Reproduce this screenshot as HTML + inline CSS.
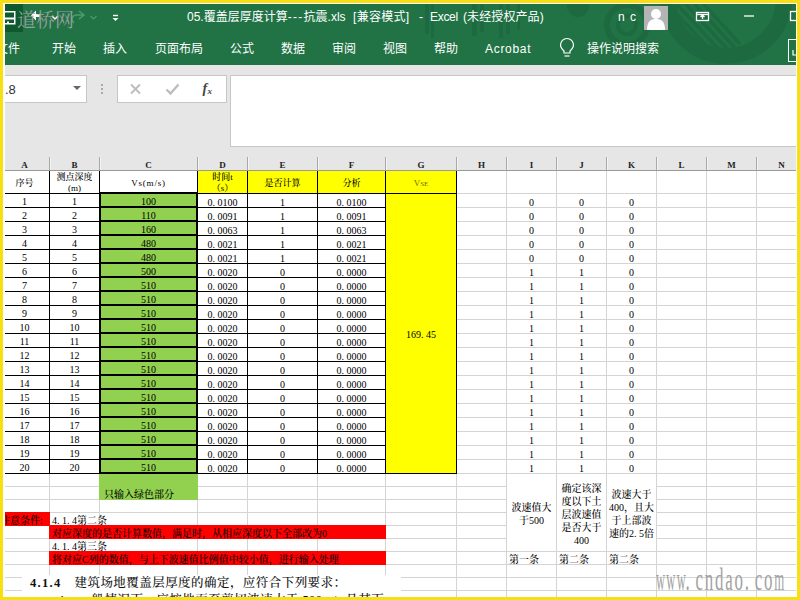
<!DOCTYPE html>
<html lang="zh-CN"><head><meta charset="utf-8"><title>05.覆盖层厚度计算---抗震.xls</title>
<style>
html,body{margin:0;padding:0}
body{width:800px;height:600px;overflow:hidden;background:#f8e010;position:relative;font-family:"Liberation Sans","Noto Sans CJK SC",sans-serif}
#frame{position:absolute;left:3px;top:3px;width:794px;height:594px;background:#fff;overflow:hidden}
#app{position:absolute;left:2px;top:1px;width:791px;height:593px;background:#fff;overflow:hidden}
.abs{position:absolute}
#green{left:0;top:0;width:791px;height:61px;background:#217346;overflow:hidden}
.tt{position:absolute;color:#fff;font-size:12px;line-height:16px;white-space:nowrap}
#gray{left:0;top:61px;width:791px;height:106px;background:#e6e6e6}
.box{position:absolute;background:#fff;border:1px solid #c6c6c6;box-sizing:border-box}
.ch{position:absolute;top:154px;height:14px;font-family:"Liberation Serif","Noto Serif CJK SC",serif;font-size:9px;font-weight:bold;line-height:14px;text-align:center;color:#222}
.cs{position:absolute;top:153px;width:1px;height:13px;background:#a8a8a8;box-shadow:1px 0 0 #f4f4f4}
#sheet{left:0;top:167px;width:791px;height:426px;background:#fff;overflow:hidden;font-family:"Liberation Serif","Noto Serif CJK SC",serif;font-size:10px;color:#000;font-weight:500}
.gl{position:absolute;background:#d4d4d4}
.c{position:absolute;box-sizing:border-box;text-align:center;white-space:nowrap;overflow:visible}
.h{font-size:9px}
.l{text-align:left;padding-left:2px}
.bk{position:absolute;background:#000}
i{font-style:normal;letter-spacing:2.5px}
</style></head><body><div id="frame"><div id="app">

<div id="green" class="abs">
<div class="abs" style="left:0;top:0;width:18px;height:28px;background:#0e5a2e"></div>
<svg class="abs" style="left:0;top:0" width="791" height="61" viewBox="5 4 791 61"><g fill="none" stroke="#1e6a40"><circle cx="726" cy="-2" r="58" stroke-width="16"/><circle cx="627" cy="25" r="20" stroke-width="6"/><circle cx="627" cy="25" r="9" stroke-width="4"/></g><clipPath id="cp"><circle cx="726" cy="-2" r="50"/></clipPath><g stroke="#1e6a40" stroke-width="3.500" clip-path="url(#cp)"><line x1="664" y1="0" x2="714" y2="54"/><line x1="673" y1="0" x2="723" y2="54"/><line x1="682" y1="0" x2="732" y2="54"/><line x1="691" y1="0" x2="737" y2="50"/><line x1="700" y1="0" x2="740" y2="44"/></g><g fill="#1e6a40"><circle cx="578" cy="6" r="11"/><rect x="425" y="4" width="4" height="30"/><rect x="431" y="4" width="3" height="34"/><rect x="472" y="4" width="5" height="32"/><rect x="480" y="4" width="4" height="28"/><rect x="499" y="4" width="4" height="34"/><rect x="506" y="4" width="4" height="30"/><rect x="517" y="4" width="3" height="26"/></g></svg>
</div>
<div class="tt" style="left:182px;top:5px;">05.覆盖层厚度计算<span style="letter-spacing:1.3px">---</span>抗震.xls</div>
<div class="tt" style="left:348px;top:5px;letter-spacing:.3px">[兼容模式]</div>
<div class="tt" style="left:414px;top:5px;">-</div>
<div class="tt" style="left:425px;top:5px;letter-spacing:-.3px">Excel</div>
<div class="tt" style="left:458px;top:5px;letter-spacing:.1px">(未经授权产品)</div>
<div class="tt" style="left:613px;top:5px;letter-spacing:1px">n c</div>
<div class="tt" style="left:-9px;top:37px;">文件</div>
<div class="tt" style="left:47px;top:37px;">开始</div>
<div class="tt" style="left:98px;top:37px;">插入</div>
<div class="tt" style="left:150px;top:37px;">页面布局</div>
<div class="tt" style="left:225px;top:37px;">公式</div>
<div class="tt" style="left:276px;top:37px;">数据</div>
<div class="tt" style="left:327px;top:37px;">审阅</div>
<div class="tt" style="left:378px;top:37px;">视图</div>
<div class="tt" style="left:429px;top:37px;">帮助</div>
<div class="tt" style="left:480px;top:37px;letter-spacing:.7px">Acrobat</div>
<div class="tt" style="left:582px;top:37px;">操作说明搜索</div>
<svg class="abs" style="left:0;top:0" width="791" height="61" viewBox="5 4 791 61">
<g fill="none" stroke="#fff"><path d="M4 11.750h10.750v12h-10.750" stroke-width="1.500"/><path d="M4 18.500h10" stroke-width="2"/></g><rect x="7" y="21.500" width="2" height="1.500" fill="#fff"/>
<path d="M31 15.500l5-5v3.500h4v3h-4v3.500z" fill="#fff"/>
<path d="M52 16l3 3 3-3" fill="none" stroke="#fff" stroke-width="1.5"/>
<path d="M79 11l5 4-5 4M84 15h-7c-5 0-7 5-3 8" fill="none" stroke="#4d9a70" stroke-width="1.500"/>
<path d="M90.500 16l3 3 3-3" fill="none" stroke="#4d9a70" stroke-width="1.200"/>
<path d="M113 15.500h5" stroke="#fff" stroke-width="1.400"/><path d="M112.500 18h6l-3 3z" fill="#fff"/>
<rect x="644" y="6" width="24" height="24" fill="#b4b4b4"/><circle cx="656" cy="14" r="5" fill="#fff"/><path d="M647 30c0-9 4-11 9-11s9 2 9 11z" fill="#fff"/>
<g fill="none" stroke="#fff" stroke-width="1.3"><rect x="696.500" y="12.500" width="12" height="8"/><path d="M696 14.500h13"/><path d="M702.500 19v-4m-2 2l2-2 2 2"/></g>
<path d="M744 16h10" stroke="#fff" stroke-width="1.3"/>
<rect x="790.500" y="11.500" width="10" height="9" fill="none" stroke="#fff" stroke-width="1.3"/>
<rect x="788.500" y="39.500" width="12" height="22" fill="none" stroke="#fff" stroke-width="1"/><path d="M793 50v5h6" fill="none" stroke="#fff" stroke-width="1.2"/>
<g fill="none" stroke="#fff" stroke-width="1.2"><path d="M564 53v-2c-3-3-3.500-4.500-3.500-6a5.500 5.500 0 0 1 13 0c0 1.500-0.500 3-3.500 6v2z"/><path d="M564.500 56h5"/></g>
</svg>
<div class="abs" style="left:12px;top:2px;font-family:'Noto Serif CJK SC',serif;font-size:19px;line-height:26px;color:#a3a5a8;opacity:.9;white-space:nowrap">道桥网</div>
<div id="gray" class="abs"></div>
<div class="box" style="left:-10px;top:71px;width:92px;height:28px"></div>
<div class="abs" style="left:0px;top:78px;font-size:13px;line-height:16px;color:#333">.8</div>
<div class="abs" style="left:68px;top:82px;width:0;height:0;border-left:4px solid transparent;border-right:4px solid transparent;border-top:4px solid #666"></div>
<div class="abs" style="left:96px;top:80px;width:2px;height:2px;background:#aaa"></div>
<div class="abs" style="left:96px;top:84px;width:2px;height:2px;background:#aaa"></div>
<div class="abs" style="left:96px;top:88px;width:2px;height:2px;background:#aaa"></div>
<div class="box" style="left:112px;top:71px;width:110px;height:28px"></div>
<svg class="abs" style="left:112px;top:71px" width="110" height="28" viewBox="117 75 110 28"><path d="M131 84.500l9 9m0-9l-9 9" stroke="#bdbdbd" stroke-width="2" fill="none"/><path d="M166.500 89.500l4 4 8-9" stroke="#bdbdbd" stroke-width="2.400" fill="none"/><text x="202.500" y="93" font-family="Liberation Serif,serif" font-style="italic" font-weight="bold" font-size="14" fill="#444">f</text><text x="207.500" y="94" font-family="Liberation Serif,serif" font-style="italic" font-weight="bold" font-size="9" fill="#444">x</text></svg>
<div class="box" style="left:225px;top:71px;width:570px;height:72px"></div>
<div class="ch" style="left:-5px;width:49px">A</div>
<div class="cs" style="left:44px"></div>
<div class="ch" style="left:45px;width:49px">B</div>
<div class="cs" style="left:94px"></div>
<div class="ch" style="left:95px;width:97px">C</div>
<div class="cs" style="left:192px"></div>
<div class="ch" style="left:193px;width:49px">D</div>
<div class="cs" style="left:242px"></div>
<div class="ch" style="left:243px;width:69px">E</div>
<div class="cs" style="left:312px"></div>
<div class="ch" style="left:313px;width:67px">F</div>
<div class="cs" style="left:380px"></div>
<div class="ch" style="left:381px;width:70px">G</div>
<div class="cs" style="left:451px"></div>
<div class="ch" style="left:452px;width:49px">H</div>
<div class="cs" style="left:501px"></div>
<div class="ch" style="left:502px;width:49px">I</div>
<div class="cs" style="left:551px"></div>
<div class="ch" style="left:552px;width:49px">J</div>
<div class="cs" style="left:601px"></div>
<div class="ch" style="left:602px;width:49px">K</div>
<div class="cs" style="left:651px"></div>
<div class="ch" style="left:652px;width:49px">L</div>
<div class="cs" style="left:701px"></div>
<div class="ch" style="left:702px;width:49px">M</div>
<div class="cs" style="left:751px"></div>
<div class="ch" style="left:752px;width:49px">N</div>
<div class="cs" style="left:801px"></div>
<div class="abs" style="left:0;top:166px;width:791px;height:1px;background:#999"></div>
<div id="sheet" class="abs">
<div class="gl" style="left:44px;top:0;width:1px;height:430px"></div>
<div class="gl" style="left:94px;top:0;width:1px;height:430px"></div>
<div class="gl" style="left:192px;top:0;width:1px;height:430px"></div>
<div class="gl" style="left:242px;top:0;width:1px;height:430px"></div>
<div class="gl" style="left:312px;top:0;width:1px;height:430px"></div>
<div class="gl" style="left:380px;top:0;width:1px;height:430px"></div>
<div class="gl" style="left:451px;top:0;width:1px;height:430px"></div>
<div class="gl" style="left:501px;top:0;width:1px;height:430px"></div>
<div class="gl" style="left:551px;top:0;width:1px;height:430px"></div>
<div class="gl" style="left:601px;top:0;width:1px;height:430px"></div>
<div class="gl" style="left:651px;top:0;width:1px;height:430px"></div>
<div class="gl" style="left:701px;top:0;width:1px;height:430px"></div>
<div class="gl" style="left:751px;top:0;width:1px;height:430px"></div>
<div class="gl" style="left:801px;top:0;width:1px;height:430px"></div>
<div class="gl" style="left:0;top:22px;width:791px;height:1px"></div>
<div class="gl" style="left:0;top:36px;width:791px;height:1px"></div>
<div class="gl" style="left:0;top:50px;width:791px;height:1px"></div>
<div class="gl" style="left:0;top:64px;width:791px;height:1px"></div>
<div class="gl" style="left:0;top:78px;width:791px;height:1px"></div>
<div class="gl" style="left:0;top:92px;width:791px;height:1px"></div>
<div class="gl" style="left:0;top:106px;width:791px;height:1px"></div>
<div class="gl" style="left:0;top:120px;width:791px;height:1px"></div>
<div class="gl" style="left:0;top:134px;width:791px;height:1px"></div>
<div class="gl" style="left:0;top:148px;width:791px;height:1px"></div>
<div class="gl" style="left:0;top:162px;width:791px;height:1px"></div>
<div class="gl" style="left:0;top:176px;width:791px;height:1px"></div>
<div class="gl" style="left:0;top:190px;width:791px;height:1px"></div>
<div class="gl" style="left:0;top:204px;width:791px;height:1px"></div>
<div class="gl" style="left:0;top:218px;width:791px;height:1px"></div>
<div class="gl" style="left:0;top:232px;width:791px;height:1px"></div>
<div class="gl" style="left:0;top:246px;width:791px;height:1px"></div>
<div class="gl" style="left:0;top:260px;width:791px;height:1px"></div>
<div class="gl" style="left:0;top:274px;width:791px;height:1px"></div>
<div class="gl" style="left:0;top:288px;width:791px;height:1px"></div>
<div class="gl" style="left:0;top:302px;width:791px;height:1px"></div>
<div class="gl" style="left:0;top:315px;width:791px;height:1px"></div>
<div class="gl" style="left:0;top:328px;width:791px;height:1px"></div>
<div class="gl" style="left:0;top:341px;width:791px;height:1px"></div>
<div class="gl" style="left:0;top:354px;width:791px;height:1px"></div>
<div class="gl" style="left:0;top:367px;width:791px;height:1px"></div>
<div class="gl" style="left:0;top:380px;width:791px;height:1px"></div>
<div class="gl" style="left:0;top:393px;width:791px;height:1px"></div>
<div class="gl" style="left:0;top:406px;width:791px;height:1px"></div>
<div class="gl" style="left:0;top:419px;width:791px;height:1px"></div>
<div class="gl" style="left:0;top:432px;width:791px;height:1px"></div>
<div class="abs" style="left:502px;top:303px;width:149px;height:77px;background:#fff"></div>
<div class="abs" style="left:551px;top:303px;width:1px;height:77px;background:#d4d4d4"></div>
<div class="abs" style="left:601px;top:303px;width:1px;height:77px;background:#d4d4d4"></div>
<div class="abs" style="left:651px;top:303px;width:1px;height:77px;background:#d4d4d4"></div>
<div class="abs" style="left:193px;top:0px;width:258px;height:22px;background:#ffff00"></div>
<div class="abs" style="left:381px;top:22px;width:70px;height:280px;background:#ffff00"></div>
<div class="abs" style="left:94px;top:22px;width:99px;height:307px;background:#92d050"></div>
<div class="abs" style="left:0px;top:341px;width:45px;height:14px;background:#ff0000"></div>
<div class="abs" style="left:44px;top:354px;width:337px;height:14px;background:#ff0000"></div>
<div class="abs" style="left:44px;top:380px;width:337px;height:14px;background:#ff0000"></div>
<div class="bk" style="left:0px;top:22px;width:381px;height:1px"></div>
<div class="bk" style="left:94px;top:21px;width:99px;height:2px"></div>
<div class="bk" style="left:0px;top:36px;width:381px;height:1px"></div>
<div class="bk" style="left:94px;top:35px;width:99px;height:2px"></div>
<div class="bk" style="left:0px;top:50px;width:381px;height:1px"></div>
<div class="bk" style="left:94px;top:49px;width:99px;height:2px"></div>
<div class="bk" style="left:0px;top:64px;width:381px;height:1px"></div>
<div class="bk" style="left:94px;top:63px;width:99px;height:2px"></div>
<div class="bk" style="left:0px;top:78px;width:381px;height:1px"></div>
<div class="bk" style="left:94px;top:77px;width:99px;height:2px"></div>
<div class="bk" style="left:0px;top:92px;width:381px;height:1px"></div>
<div class="bk" style="left:94px;top:91px;width:99px;height:2px"></div>
<div class="bk" style="left:0px;top:106px;width:381px;height:1px"></div>
<div class="bk" style="left:94px;top:105px;width:99px;height:2px"></div>
<div class="bk" style="left:0px;top:120px;width:381px;height:1px"></div>
<div class="bk" style="left:94px;top:119px;width:99px;height:2px"></div>
<div class="bk" style="left:0px;top:134px;width:381px;height:1px"></div>
<div class="bk" style="left:94px;top:133px;width:99px;height:2px"></div>
<div class="bk" style="left:0px;top:148px;width:381px;height:1px"></div>
<div class="bk" style="left:94px;top:147px;width:99px;height:2px"></div>
<div class="bk" style="left:0px;top:162px;width:381px;height:1px"></div>
<div class="bk" style="left:94px;top:161px;width:99px;height:2px"></div>
<div class="bk" style="left:0px;top:176px;width:381px;height:1px"></div>
<div class="bk" style="left:94px;top:175px;width:99px;height:2px"></div>
<div class="bk" style="left:0px;top:190px;width:381px;height:1px"></div>
<div class="bk" style="left:94px;top:189px;width:99px;height:2px"></div>
<div class="bk" style="left:0px;top:204px;width:381px;height:1px"></div>
<div class="bk" style="left:94px;top:203px;width:99px;height:2px"></div>
<div class="bk" style="left:0px;top:218px;width:381px;height:1px"></div>
<div class="bk" style="left:94px;top:217px;width:99px;height:2px"></div>
<div class="bk" style="left:0px;top:232px;width:381px;height:1px"></div>
<div class="bk" style="left:94px;top:231px;width:99px;height:2px"></div>
<div class="bk" style="left:0px;top:246px;width:381px;height:1px"></div>
<div class="bk" style="left:94px;top:245px;width:99px;height:2px"></div>
<div class="bk" style="left:0px;top:260px;width:381px;height:1px"></div>
<div class="bk" style="left:94px;top:259px;width:99px;height:2px"></div>
<div class="bk" style="left:0px;top:274px;width:381px;height:1px"></div>
<div class="bk" style="left:94px;top:273px;width:99px;height:2px"></div>
<div class="bk" style="left:0px;top:288px;width:381px;height:1px"></div>
<div class="bk" style="left:94px;top:287px;width:99px;height:2px"></div>
<div class="bk" style="left:0px;top:302px;width:381px;height:1px"></div>
<div class="bk" style="left:94px;top:301px;width:99px;height:2px"></div>
<div class="bk" style="left:380px;top:22px;width:72px;height:1px"></div>
<div class="bk" style="left:380px;top:302px;width:72px;height:1px"></div>
<div class="bk" style="left:44px;top:0px;width:1px;height:303px"></div>
<div class="bk" style="left:94px;top:0px;width:1px;height:303px"></div>
<div class="bk" style="left:192px;top:0px;width:1px;height:303px"></div>
<div class="bk" style="left:242px;top:0px;width:1px;height:303px"></div>
<div class="bk" style="left:312px;top:0px;width:1px;height:303px"></div>
<div class="bk" style="left:380px;top:0px;width:1px;height:303px"></div>
<div class="bk" style="left:451px;top:0px;width:1px;height:303px"></div>
<div class="bk" style="left:94px;top:21px;width:2px;height:282px"></div>
<div class="bk" style="left:191px;top:21px;width:2px;height:282px"></div>
<div class="c h" style="left:-5px;top:1px;width:49px;height:22px;line-height:22px;">序号</div>
<div class="c h" style="left:45px;top:1px;width:49px;height:22px;line-height:11px;">测点深度<br>(m)</div>
<div class="c h" style="left:95px;top:1px;width:97px;height:22px;line-height:22px;letter-spacing:.8px">Vs(m/s)</div>
<div class="c h" style="left:193px;top:1px;width:49px;height:22px;line-height:11px;">时间t<br>（s）</div>
<div class="c h" style="left:243px;top:1px;width:69px;height:22px;line-height:22px;">是否计算</div>
<div class="c h" style="left:313px;top:1px;width:67px;height:22px;line-height:22px;">分析</div>
<div class="c h" style="left:381px;top:1px;width:70px;height:22px;line-height:22px;color:#7a6a00">V<span style="font-size:7px">SE</span></div>
<div class="c" style="left:-5px;top:24px;width:49px;height:13px;line-height:13px;">1</div>
<div class="c" style="left:45px;top:24px;width:49px;height:13px;line-height:13px;">1</div>
<div class="c" style="left:95px;top:24px;width:97px;height:13px;line-height:13px;">100</div>
<div class="c" style="left:193px;top:25px;width:49px;height:13px;line-height:13px;">0<i>.</i>0100</div>
<div class="c" style="left:243px;top:25px;width:69px;height:13px;line-height:13px;">1</div>
<div class="c" style="left:313px;top:25px;width:67px;height:13px;line-height:13px;">0<i>.</i>0100</div>
<div class="c" style="left:502px;top:25px;width:49px;height:13px;line-height:13px;">0</div>
<div class="c" style="left:552px;top:25px;width:49px;height:13px;line-height:13px;">0</div>
<div class="c" style="left:602px;top:25px;width:49px;height:13px;line-height:13px;">0</div>
<div class="c" style="left:-5px;top:38px;width:49px;height:13px;line-height:13px;">2</div>
<div class="c" style="left:45px;top:38px;width:49px;height:13px;line-height:13px;">2</div>
<div class="c" style="left:95px;top:38px;width:97px;height:13px;line-height:13px;">110</div>
<div class="c" style="left:193px;top:39px;width:49px;height:13px;line-height:13px;">0<i>.</i>0091</div>
<div class="c" style="left:243px;top:39px;width:69px;height:13px;line-height:13px;">1</div>
<div class="c" style="left:313px;top:39px;width:67px;height:13px;line-height:13px;">0<i>.</i>0091</div>
<div class="c" style="left:502px;top:39px;width:49px;height:13px;line-height:13px;">0</div>
<div class="c" style="left:552px;top:39px;width:49px;height:13px;line-height:13px;">0</div>
<div class="c" style="left:602px;top:39px;width:49px;height:13px;line-height:13px;">0</div>
<div class="c" style="left:-5px;top:52px;width:49px;height:13px;line-height:13px;">3</div>
<div class="c" style="left:45px;top:52px;width:49px;height:13px;line-height:13px;">3</div>
<div class="c" style="left:95px;top:52px;width:97px;height:13px;line-height:13px;">160</div>
<div class="c" style="left:193px;top:53px;width:49px;height:13px;line-height:13px;">0<i>.</i>0063</div>
<div class="c" style="left:243px;top:53px;width:69px;height:13px;line-height:13px;">1</div>
<div class="c" style="left:313px;top:53px;width:67px;height:13px;line-height:13px;">0<i>.</i>0063</div>
<div class="c" style="left:502px;top:53px;width:49px;height:13px;line-height:13px;">0</div>
<div class="c" style="left:552px;top:53px;width:49px;height:13px;line-height:13px;">0</div>
<div class="c" style="left:602px;top:53px;width:49px;height:13px;line-height:13px;">0</div>
<div class="c" style="left:-5px;top:66px;width:49px;height:13px;line-height:13px;">4</div>
<div class="c" style="left:45px;top:66px;width:49px;height:13px;line-height:13px;">4</div>
<div class="c" style="left:95px;top:66px;width:97px;height:13px;line-height:13px;">480</div>
<div class="c" style="left:193px;top:67px;width:49px;height:13px;line-height:13px;">0<i>.</i>0021</div>
<div class="c" style="left:243px;top:67px;width:69px;height:13px;line-height:13px;">1</div>
<div class="c" style="left:313px;top:67px;width:67px;height:13px;line-height:13px;">0<i>.</i>0021</div>
<div class="c" style="left:502px;top:67px;width:49px;height:13px;line-height:13px;">0</div>
<div class="c" style="left:552px;top:67px;width:49px;height:13px;line-height:13px;">0</div>
<div class="c" style="left:602px;top:67px;width:49px;height:13px;line-height:13px;">0</div>
<div class="c" style="left:-5px;top:80px;width:49px;height:13px;line-height:13px;">5</div>
<div class="c" style="left:45px;top:80px;width:49px;height:13px;line-height:13px;">5</div>
<div class="c" style="left:95px;top:80px;width:97px;height:13px;line-height:13px;">480</div>
<div class="c" style="left:193px;top:81px;width:49px;height:13px;line-height:13px;">0<i>.</i>0021</div>
<div class="c" style="left:243px;top:81px;width:69px;height:13px;line-height:13px;">1</div>
<div class="c" style="left:313px;top:81px;width:67px;height:13px;line-height:13px;">0<i>.</i>0021</div>
<div class="c" style="left:502px;top:81px;width:49px;height:13px;line-height:13px;">0</div>
<div class="c" style="left:552px;top:81px;width:49px;height:13px;line-height:13px;">0</div>
<div class="c" style="left:602px;top:81px;width:49px;height:13px;line-height:13px;">0</div>
<div class="c" style="left:-5px;top:94px;width:49px;height:13px;line-height:13px;">6</div>
<div class="c" style="left:45px;top:94px;width:49px;height:13px;line-height:13px;">6</div>
<div class="c" style="left:95px;top:94px;width:97px;height:13px;line-height:13px;">500</div>
<div class="c" style="left:193px;top:95px;width:49px;height:13px;line-height:13px;">0<i>.</i>0020</div>
<div class="c" style="left:243px;top:95px;width:69px;height:13px;line-height:13px;">0</div>
<div class="c" style="left:313px;top:95px;width:67px;height:13px;line-height:13px;">0<i>.</i>0000</div>
<div class="c" style="left:502px;top:95px;width:49px;height:13px;line-height:13px;">1</div>
<div class="c" style="left:552px;top:95px;width:49px;height:13px;line-height:13px;">1</div>
<div class="c" style="left:602px;top:95px;width:49px;height:13px;line-height:13px;">0</div>
<div class="c" style="left:-5px;top:108px;width:49px;height:13px;line-height:13px;">7</div>
<div class="c" style="left:45px;top:108px;width:49px;height:13px;line-height:13px;">7</div>
<div class="c" style="left:95px;top:108px;width:97px;height:13px;line-height:13px;">510</div>
<div class="c" style="left:193px;top:109px;width:49px;height:13px;line-height:13px;">0<i>.</i>0020</div>
<div class="c" style="left:243px;top:109px;width:69px;height:13px;line-height:13px;">0</div>
<div class="c" style="left:313px;top:109px;width:67px;height:13px;line-height:13px;">0<i>.</i>0000</div>
<div class="c" style="left:502px;top:109px;width:49px;height:13px;line-height:13px;">1</div>
<div class="c" style="left:552px;top:109px;width:49px;height:13px;line-height:13px;">1</div>
<div class="c" style="left:602px;top:109px;width:49px;height:13px;line-height:13px;">0</div>
<div class="c" style="left:-5px;top:122px;width:49px;height:13px;line-height:13px;">8</div>
<div class="c" style="left:45px;top:122px;width:49px;height:13px;line-height:13px;">8</div>
<div class="c" style="left:95px;top:122px;width:97px;height:13px;line-height:13px;">510</div>
<div class="c" style="left:193px;top:123px;width:49px;height:13px;line-height:13px;">0<i>.</i>0020</div>
<div class="c" style="left:243px;top:123px;width:69px;height:13px;line-height:13px;">0</div>
<div class="c" style="left:313px;top:123px;width:67px;height:13px;line-height:13px;">0<i>.</i>0000</div>
<div class="c" style="left:502px;top:123px;width:49px;height:13px;line-height:13px;">1</div>
<div class="c" style="left:552px;top:123px;width:49px;height:13px;line-height:13px;">1</div>
<div class="c" style="left:602px;top:123px;width:49px;height:13px;line-height:13px;">0</div>
<div class="c" style="left:-5px;top:136px;width:49px;height:13px;line-height:13px;">9</div>
<div class="c" style="left:45px;top:136px;width:49px;height:13px;line-height:13px;">9</div>
<div class="c" style="left:95px;top:136px;width:97px;height:13px;line-height:13px;">510</div>
<div class="c" style="left:193px;top:137px;width:49px;height:13px;line-height:13px;">0<i>.</i>0020</div>
<div class="c" style="left:243px;top:137px;width:69px;height:13px;line-height:13px;">0</div>
<div class="c" style="left:313px;top:137px;width:67px;height:13px;line-height:13px;">0<i>.</i>0000</div>
<div class="c" style="left:502px;top:137px;width:49px;height:13px;line-height:13px;">1</div>
<div class="c" style="left:552px;top:137px;width:49px;height:13px;line-height:13px;">1</div>
<div class="c" style="left:602px;top:137px;width:49px;height:13px;line-height:13px;">0</div>
<div class="c" style="left:-5px;top:150px;width:49px;height:13px;line-height:13px;">10</div>
<div class="c" style="left:45px;top:150px;width:49px;height:13px;line-height:13px;">10</div>
<div class="c" style="left:95px;top:150px;width:97px;height:13px;line-height:13px;">510</div>
<div class="c" style="left:193px;top:151px;width:49px;height:13px;line-height:13px;">0<i>.</i>0020</div>
<div class="c" style="left:243px;top:151px;width:69px;height:13px;line-height:13px;">0</div>
<div class="c" style="left:313px;top:151px;width:67px;height:13px;line-height:13px;">0<i>.</i>0000</div>
<div class="c" style="left:502px;top:151px;width:49px;height:13px;line-height:13px;">1</div>
<div class="c" style="left:552px;top:151px;width:49px;height:13px;line-height:13px;">1</div>
<div class="c" style="left:602px;top:151px;width:49px;height:13px;line-height:13px;">0</div>
<div class="c" style="left:-5px;top:164px;width:49px;height:13px;line-height:13px;">11</div>
<div class="c" style="left:45px;top:164px;width:49px;height:13px;line-height:13px;">11</div>
<div class="c" style="left:95px;top:164px;width:97px;height:13px;line-height:13px;">510</div>
<div class="c" style="left:193px;top:165px;width:49px;height:13px;line-height:13px;">0<i>.</i>0020</div>
<div class="c" style="left:243px;top:165px;width:69px;height:13px;line-height:13px;">0</div>
<div class="c" style="left:313px;top:165px;width:67px;height:13px;line-height:13px;">0<i>.</i>0000</div>
<div class="c" style="left:502px;top:165px;width:49px;height:13px;line-height:13px;">1</div>
<div class="c" style="left:552px;top:165px;width:49px;height:13px;line-height:13px;">1</div>
<div class="c" style="left:602px;top:165px;width:49px;height:13px;line-height:13px;">0</div>
<div class="c" style="left:-5px;top:178px;width:49px;height:13px;line-height:13px;">12</div>
<div class="c" style="left:45px;top:178px;width:49px;height:13px;line-height:13px;">12</div>
<div class="c" style="left:95px;top:178px;width:97px;height:13px;line-height:13px;">510</div>
<div class="c" style="left:193px;top:179px;width:49px;height:13px;line-height:13px;">0<i>.</i>0020</div>
<div class="c" style="left:243px;top:179px;width:69px;height:13px;line-height:13px;">0</div>
<div class="c" style="left:313px;top:179px;width:67px;height:13px;line-height:13px;">0<i>.</i>0000</div>
<div class="c" style="left:502px;top:179px;width:49px;height:13px;line-height:13px;">1</div>
<div class="c" style="left:552px;top:179px;width:49px;height:13px;line-height:13px;">1</div>
<div class="c" style="left:602px;top:179px;width:49px;height:13px;line-height:13px;">0</div>
<div class="c" style="left:-5px;top:192px;width:49px;height:13px;line-height:13px;">13</div>
<div class="c" style="left:45px;top:192px;width:49px;height:13px;line-height:13px;">13</div>
<div class="c" style="left:95px;top:192px;width:97px;height:13px;line-height:13px;">510</div>
<div class="c" style="left:193px;top:193px;width:49px;height:13px;line-height:13px;">0<i>.</i>0020</div>
<div class="c" style="left:243px;top:193px;width:69px;height:13px;line-height:13px;">0</div>
<div class="c" style="left:313px;top:193px;width:67px;height:13px;line-height:13px;">0<i>.</i>0000</div>
<div class="c" style="left:502px;top:193px;width:49px;height:13px;line-height:13px;">1</div>
<div class="c" style="left:552px;top:193px;width:49px;height:13px;line-height:13px;">1</div>
<div class="c" style="left:602px;top:193px;width:49px;height:13px;line-height:13px;">0</div>
<div class="c" style="left:-5px;top:206px;width:49px;height:13px;line-height:13px;">14</div>
<div class="c" style="left:45px;top:206px;width:49px;height:13px;line-height:13px;">14</div>
<div class="c" style="left:95px;top:206px;width:97px;height:13px;line-height:13px;">510</div>
<div class="c" style="left:193px;top:207px;width:49px;height:13px;line-height:13px;">0<i>.</i>0020</div>
<div class="c" style="left:243px;top:207px;width:69px;height:13px;line-height:13px;">0</div>
<div class="c" style="left:313px;top:207px;width:67px;height:13px;line-height:13px;">0<i>.</i>0000</div>
<div class="c" style="left:502px;top:207px;width:49px;height:13px;line-height:13px;">1</div>
<div class="c" style="left:552px;top:207px;width:49px;height:13px;line-height:13px;">1</div>
<div class="c" style="left:602px;top:207px;width:49px;height:13px;line-height:13px;">0</div>
<div class="c" style="left:-5px;top:220px;width:49px;height:13px;line-height:13px;">15</div>
<div class="c" style="left:45px;top:220px;width:49px;height:13px;line-height:13px;">15</div>
<div class="c" style="left:95px;top:220px;width:97px;height:13px;line-height:13px;">510</div>
<div class="c" style="left:193px;top:221px;width:49px;height:13px;line-height:13px;">0<i>.</i>0020</div>
<div class="c" style="left:243px;top:221px;width:69px;height:13px;line-height:13px;">0</div>
<div class="c" style="left:313px;top:221px;width:67px;height:13px;line-height:13px;">0<i>.</i>0000</div>
<div class="c" style="left:502px;top:221px;width:49px;height:13px;line-height:13px;">1</div>
<div class="c" style="left:552px;top:221px;width:49px;height:13px;line-height:13px;">1</div>
<div class="c" style="left:602px;top:221px;width:49px;height:13px;line-height:13px;">0</div>
<div class="c" style="left:-5px;top:234px;width:49px;height:13px;line-height:13px;">16</div>
<div class="c" style="left:45px;top:234px;width:49px;height:13px;line-height:13px;">16</div>
<div class="c" style="left:95px;top:234px;width:97px;height:13px;line-height:13px;">510</div>
<div class="c" style="left:193px;top:235px;width:49px;height:13px;line-height:13px;">0<i>.</i>0020</div>
<div class="c" style="left:243px;top:235px;width:69px;height:13px;line-height:13px;">0</div>
<div class="c" style="left:313px;top:235px;width:67px;height:13px;line-height:13px;">0<i>.</i>0000</div>
<div class="c" style="left:502px;top:235px;width:49px;height:13px;line-height:13px;">1</div>
<div class="c" style="left:552px;top:235px;width:49px;height:13px;line-height:13px;">1</div>
<div class="c" style="left:602px;top:235px;width:49px;height:13px;line-height:13px;">0</div>
<div class="c" style="left:-5px;top:248px;width:49px;height:13px;line-height:13px;">17</div>
<div class="c" style="left:45px;top:248px;width:49px;height:13px;line-height:13px;">17</div>
<div class="c" style="left:95px;top:248px;width:97px;height:13px;line-height:13px;">510</div>
<div class="c" style="left:193px;top:249px;width:49px;height:13px;line-height:13px;">0<i>.</i>0020</div>
<div class="c" style="left:243px;top:249px;width:69px;height:13px;line-height:13px;">0</div>
<div class="c" style="left:313px;top:249px;width:67px;height:13px;line-height:13px;">0<i>.</i>0000</div>
<div class="c" style="left:502px;top:249px;width:49px;height:13px;line-height:13px;">1</div>
<div class="c" style="left:552px;top:249px;width:49px;height:13px;line-height:13px;">1</div>
<div class="c" style="left:602px;top:249px;width:49px;height:13px;line-height:13px;">0</div>
<div class="c" style="left:-5px;top:262px;width:49px;height:13px;line-height:13px;">18</div>
<div class="c" style="left:45px;top:262px;width:49px;height:13px;line-height:13px;">18</div>
<div class="c" style="left:95px;top:262px;width:97px;height:13px;line-height:13px;">510</div>
<div class="c" style="left:193px;top:263px;width:49px;height:13px;line-height:13px;">0<i>.</i>0020</div>
<div class="c" style="left:243px;top:263px;width:69px;height:13px;line-height:13px;">0</div>
<div class="c" style="left:313px;top:263px;width:67px;height:13px;line-height:13px;">0<i>.</i>0000</div>
<div class="c" style="left:502px;top:263px;width:49px;height:13px;line-height:13px;">1</div>
<div class="c" style="left:552px;top:263px;width:49px;height:13px;line-height:13px;">1</div>
<div class="c" style="left:602px;top:263px;width:49px;height:13px;line-height:13px;">0</div>
<div class="c" style="left:-5px;top:276px;width:49px;height:13px;line-height:13px;">19</div>
<div class="c" style="left:45px;top:276px;width:49px;height:13px;line-height:13px;">19</div>
<div class="c" style="left:95px;top:276px;width:97px;height:13px;line-height:13px;">510</div>
<div class="c" style="left:193px;top:277px;width:49px;height:13px;line-height:13px;">0<i>.</i>0020</div>
<div class="c" style="left:243px;top:277px;width:69px;height:13px;line-height:13px;">0</div>
<div class="c" style="left:313px;top:277px;width:67px;height:13px;line-height:13px;">0<i>.</i>0000</div>
<div class="c" style="left:502px;top:277px;width:49px;height:13px;line-height:13px;">1</div>
<div class="c" style="left:552px;top:277px;width:49px;height:13px;line-height:13px;">1</div>
<div class="c" style="left:602px;top:277px;width:49px;height:13px;line-height:13px;">0</div>
<div class="c" style="left:-5px;top:290px;width:49px;height:13px;line-height:13px;">20</div>
<div class="c" style="left:45px;top:290px;width:49px;height:13px;line-height:13px;">20</div>
<div class="c" style="left:95px;top:290px;width:97px;height:13px;line-height:13px;">510</div>
<div class="c" style="left:193px;top:291px;width:49px;height:13px;line-height:13px;">0<i>.</i>0020</div>
<div class="c" style="left:243px;top:291px;width:69px;height:13px;line-height:13px;">0</div>
<div class="c" style="left:313px;top:291px;width:67px;height:13px;line-height:13px;">0<i>.</i>0000</div>
<div class="c" style="left:502px;top:291px;width:49px;height:13px;line-height:13px;">1</div>
<div class="c" style="left:552px;top:291px;width:49px;height:13px;line-height:13px;">1</div>
<div class="c" style="left:602px;top:291px;width:49px;height:13px;line-height:13px;">0</div>
<div class="c" style="left:381px;top:24px;width:70px;height:279px;line-height:14px;padding-top:133px">169<i>.</i>45</div>
<div class="c l" style="left:95px;top:318px;width:97px;height:12px;line-height:12px;padding-left:4px">只输入绿色部分</div>
<div class="c l" style="left:-5px;top:344px;width:49px;height:12px;line-height:12px;margin-left:-2px">注意条件:</div>
<div class="c l" style="left:45px;top:344px;width:49px;height:12px;line-height:12px;">4<i>.</i>1<i>.</i>4第二条</div>
<div class="c l" style="left:45px;top:357px;width:335px;height:12px;line-height:12px;">对应深度的是否计算数值，满足时，从相应深度以下全部改为0</div>
<div class="c l" style="left:45px;top:370px;width:49px;height:12px;line-height:12px;">4<i>.</i>1<i>.</i>4第三条</div>
<div class="c l" style="left:45px;top:383px;width:335px;height:12px;line-height:12px;">将对应C列的数值，与上下波速值比例值中较小值，进行输入处理</div>
<div class="c" style="left:502px;top:304px;width:49px;height:77px;line-height:13px;padding-top:26px">波速值大<br>于500</div>
<div class="c" style="left:552px;top:304px;width:49px;height:77px;line-height:13px;padding-top:7px">确定该深<br>度以下土<br>层波速值<br>是否大于<br>400</div>
<div class="c" style="left:602px;top:304px;width:49px;height:77px;line-height:13px;padding-top:13px">波速大于<br>400，且大<br>于上部波<br>速的2<i>.</i>5倍</div>
<div class="c l" style="left:502px;top:383px;width:49px;height:12px;line-height:12px;">第一条</div>
<div class="c l" style="left:552px;top:383px;width:49px;height:12px;line-height:12px;">第二条</div>
<div class="c l" style="left:602px;top:383px;width:49px;height:12px;line-height:12px;">第二条</div>
<div class="abs" style="left:17px;top:404px;width:379px;height:30px;background:#fff;font-family:'Liberation Serif','Noto Serif CJK SC',serif;font-size:12.500px;letter-spacing:.45px;white-space:nowrap;color:#111"><div class="abs" style="left:8px;top:-1px;line-height:18px"><b id="pb" style="letter-spacing:1.300px">4.1.4</b><span id="ps" style="margin-left:13px">建筑场地覆盖层厚度的确定，应符合下列要求：</span></div><div class="abs" style="left:37px;top:16px;line-height:18px">1　一般情况下，应按地面至剪切波速大于 500m/s 且其下</div></div>
<div id="wm" class="abs" style="left:651px;top:391px;font-family:'Liberation Serif',serif;font-size:32px;font-weight:400;line-height:34px;color:#a2a2a2;transform:scaleX(.528);transform-origin:0 0;white-space:nowrap;letter-spacing:3.400px"><span style="display:inline-block;width:56px;transform:scaleX(.74);transform-origin:0 0">www</span><span style="letter-spacing:10.700px">.</span>cndao<span style="letter-spacing:10.700px">.</span>co<span style="display:inline-block;width:19px;transform:scaleX(.76);transform-origin:0 0">m</span></div>
</div>
</div></div></body></html>
